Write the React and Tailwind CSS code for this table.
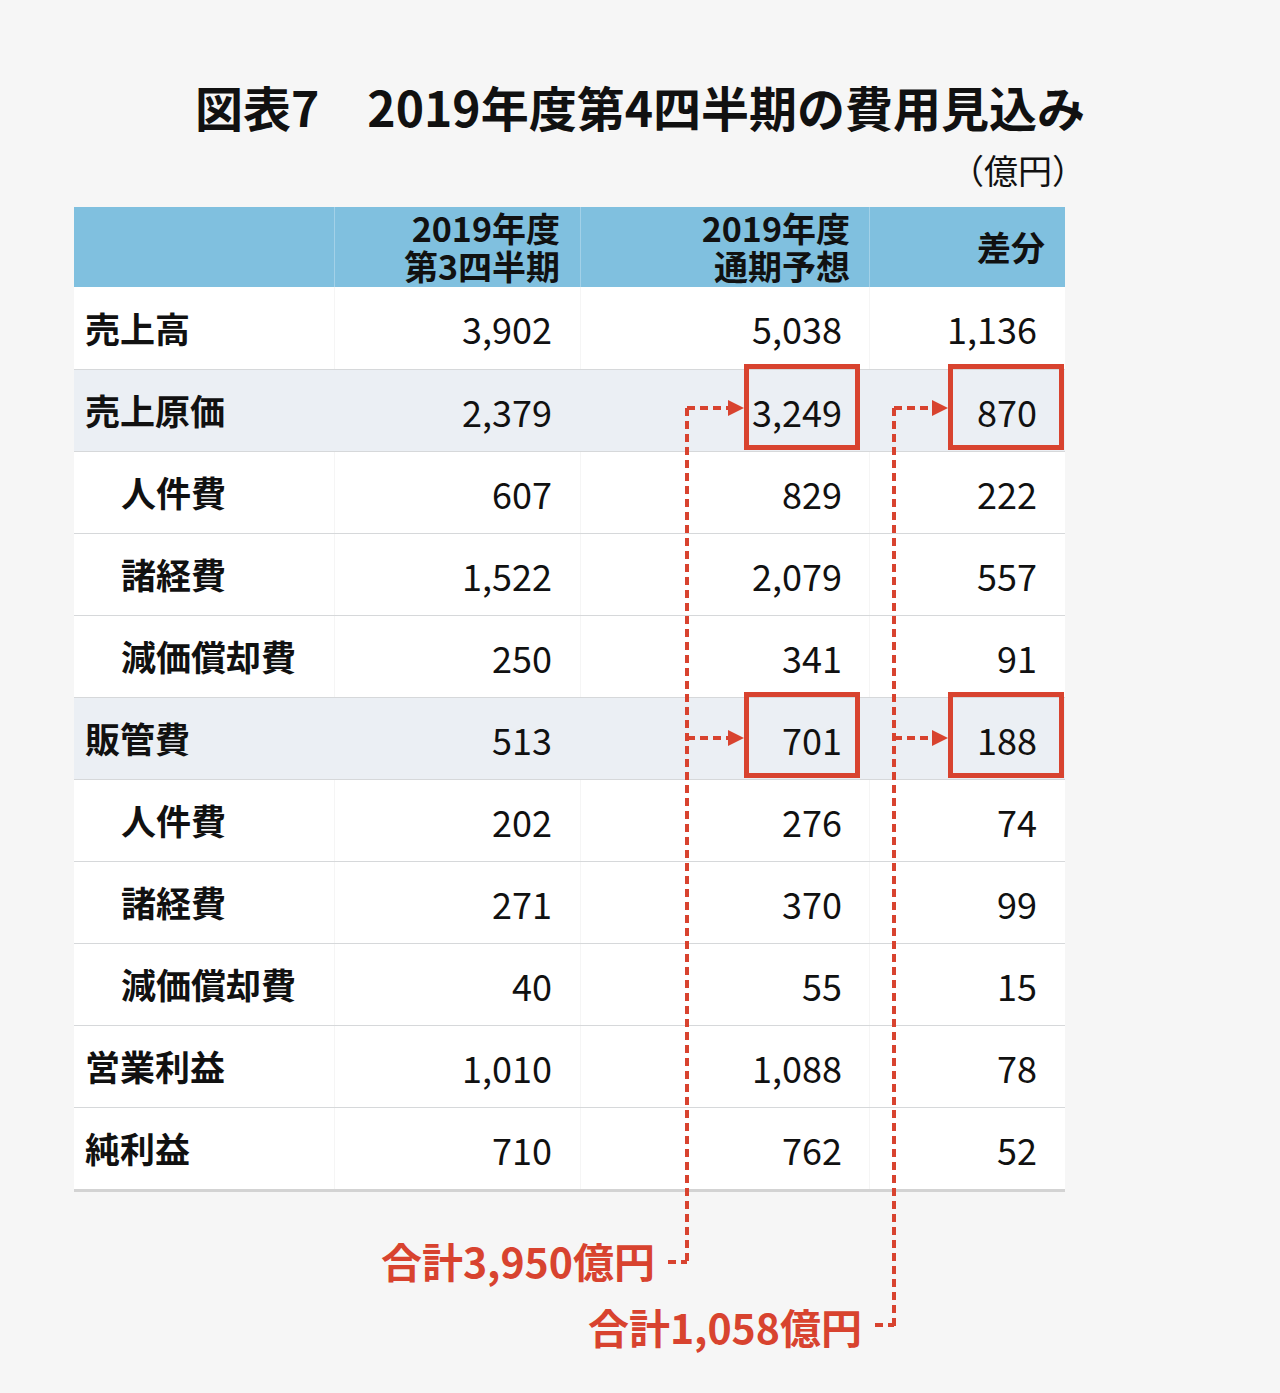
import React from 'react';

const RED = '#d8432f';

const rows = [
  { label: '売上高', a: '3,902', b: '5,038', c: '1,136' },
  { label: '売上原価', a: '2,379', b: '3,249', c: '870', hl: true, box: true },
  { label: '人件費', a: '607', b: '829', c: '222', indent: true },
  { label: '諸経費', a: '1,522', b: '2,079', c: '557', indent: true },
  { label: '減価償却費', a: '250', b: '341', c: '91', indent: true },
  { label: '販管費', a: '513', b: '701', c: '188', hl: true, box: true },
  { label: '人件費', a: '202', b: '276', c: '74', indent: true },
  { label: '諸経費', a: '271', b: '370', c: '99', indent: true },
  { label: '減価償却費', a: '40', b: '55', c: '15', indent: true },
  { label: '営業利益', a: '1,010', b: '1,088', c: '78' },
  { label: '純利益', a: '710', b: '762', c: '52' },
];

function Arrows() {
  return (
    <svg className="absolute left-0 top-0 pointer-events-none" width="991" height="1186" viewBox="0 0 991 1186">
      <g stroke={RED} strokeWidth="4" strokeDasharray="8 5" fill="none">
        <line x1="613" y1="201" x2="613" y2="1057" />
        <line x1="613" y1="201" x2="655" y2="201" />
        <line x1="613" y1="531" x2="655" y2="531" />
        <line x1="594" y1="1055" x2="613" y2="1055" />
        <line x1="820" y1="201" x2="820" y2="1120" />
        <line x1="820" y1="201" x2="859" y2="201" />
        <line x1="820" y1="531" x2="859" y2="531" />
        <line x1="801" y1="1118" x2="820" y2="1118" />
      </g>
      <g fill={RED}>
        <polygon points="654,193 670,201 654,209" />
        <polygon points="654,523 670,531 654,539" />
        <polygon points="858,193 874,201 858,209" />
        <polygon points="858,523 874,531 858,539" />
      </g>
    </svg>
  );
}

function Row({ r, first }) {
  const bg = r.hl ? 'bg-[#ebeff4]' : 'bg-white';
  const sep = r.hl ? 'border-[#ebeff4]' : 'border-[#f5f5f5]';
  return (
    <div className={`grid grid-cols-[260px_246px_289px_196px] h-[82px] ${bg} ${first ? '' : 'border-t border-[#d6d8da]'}`}>
      <div className={`flex items-center text-[35px] font-bold ${r.indent ? 'pl-[47px]' : 'pl-[11px]'}`}>{r.label}</div>
      <div className={`flex items-center justify-end pr-[28px] text-[36px] border-l ${sep}`}>{r.a}</div>
      <div className={`relative flex items-center justify-end pr-[27px] text-[36px] border-l ${sep}`}>
        {r.box && <div className="absolute left-[163px] top-[-6px] w-[116px] h-[86px] border-[5px] border-[#d8432f]" />}
        <span className="relative">{r.b}</span>
      </div>
      <div className={`relative flex items-center justify-end pr-[28px] text-[36px] border-l ${sep}`}>
        {r.box && <div className="absolute left-[78px] top-[-6px] w-[116px] h-[86px] border-[5px] border-[#d8432f]" />}
        <span className="relative">{r.c}</span>
      </div>
    </div>
  );
}

export default function App() {
  return (
    <div className="min-h-[1393px] bg-[#f6f6f6] text-[#111] font-['Noto_Sans_CJK_JP',sans-serif]">
      <div className="w-[1280px] pt-[76px]">
        <h1 className="text-center text-[48px] font-bold leading-[60px]">図表7　2019年度第4四半期の費用見込み</h1>
        <div className="ml-[74px] w-[1012px] mt-[14px] text-right text-[34px] leading-[40px]">（億円）</div>
        <div className="relative ml-[74px] w-[991px] mt-[17px]">
          <div className="grid grid-cols-[260px_246px_289px_196px] h-[80px] bg-[#80c0df] text-[34px] font-bold leading-[38px] text-right">
            <div />
            <div className="flex items-center justify-end pr-[20px] border-l border-[#a3d1e8]">
              <p>2019年度<br />第3四半期</p>
            </div>
            <div className="flex items-center justify-end pr-[19px] border-l border-[#a3d1e8]">
              <p>2019年度<br />通期予想</p>
            </div>
            <div className="flex items-center justify-end pr-[20px] border-l border-[#a3d1e8]">
              <p>差分</p>
            </div>
          </div>
          {rows.map((r, i) => (
            <Row key={i} r={r} first={i === 0} />
          ))}
          <div className="h-[3px] bg-[#d3d3d3]" />
          <div className="mt-[35px] text-[41px] font-bold leading-[66px] text-[#d8432f]">
            <div className="w-[581px] text-right">合計3,950億円</div>
            <div className="w-[788px] text-right">合計1,058億円</div>
          </div>
          <Arrows />
        </div>
      </div>
    </div>
  );
}
